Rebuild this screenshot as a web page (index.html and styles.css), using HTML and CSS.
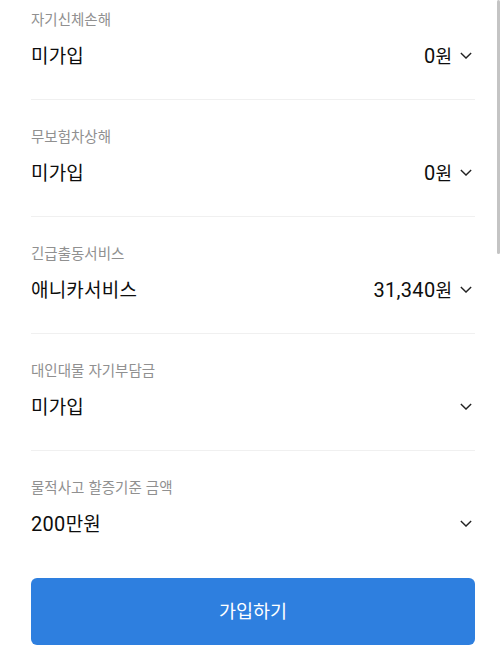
FILE: index.html
```html
<!DOCTYPE html>
<html lang="ko">
<head>
<meta charset="utf-8">
<link rel="stylesheet" href="styles.css">
</head>
<body>
<div class="page">
  <div class="list">
    <div class="item">
      <div class="label">자기신체손해</div>
      <div class="row"><span class="value">미가입</span><span class="right"><span class="price"><span class="num">0</span>원</span><svg class="chev" viewBox="0 0 14 8"><path d="M1 1l6 6 6-6"/></svg></span></div>
    </div>
    <div class="item">
      <div class="label">무보험차상해</div>
      <div class="row"><span class="value">미가입</span><span class="right"><span class="price"><span class="num">0</span>원</span><svg class="chev" viewBox="0 0 14 8"><path d="M1 1l6 6 6-6"/></svg></span></div>
    </div>
    <div class="item">
      <div class="label">긴급출동서비스</div>
      <div class="row"><span class="value">애니카서비스</span><span class="right"><span class="price"><span class="num">31,340</span>원</span><svg class="chev" viewBox="0 0 14 8"><path d="M1 1l6 6 6-6"/></svg></span></div>
    </div>
    <div class="item">
      <div class="label">대인대물 자기부담금</div>
      <div class="row"><span class="value">미가입</span><span class="right"><svg class="chev" viewBox="0 0 14 8"><path d="M1 1l6 6 6-6"/></svg></span></div>
    </div>
    <div class="item last">
      <div class="label">물적사고 할증기준 금액</div>
      <div class="row"><span class="value"><span class="num">200</span>만원</span><span class="right"><svg class="chev" viewBox="0 0 14 8"><path d="M1 1l6 6 6-6"/></svg></span></div>
    </div>
  </div>
  <button class="cta">가입하기</button>
</div>
<div class="scrollbar"></div>
</body>
</html>
```
FILE: styles.css
```css
html, body {
  margin: 0;
  padding: 0;
  background: #fff;
  overflow: hidden;
}
body {
  font-family: "Noto Sans CJK KR", "Noto Sans", sans-serif;
  color: #111;
}
.page {
  padding: 0 25px 0 31px;
}
.list {
  display: flex;
  flex-direction: column;
}
.item {
  padding: 26px 0 31px;
  border-bottom: 1px solid #f0f0f0;
}
.item:first-child {
  padding-top: 9px;
}
.item.last {
  border-bottom: none;
  padding-bottom: 42px;
}
.label {
  font-size: 14.5px;
  line-height: 20px;
  color: #909090;
}
.row {
  margin-top: 13px;
  display: flex;
  align-items: center;
  justify-content: space-between;
  height: 26px;
}
.value {
  font-size: 19px;
  font-weight: 400;
  line-height: 26px;
  color: #0d0d0d;
  letter-spacing: 0.2px;
}
.num {
  font-family: Roboto, "Noto Sans CJK KR", sans-serif;
  font-size: 20px;
  font-weight: 400;
  letter-spacing: 0.3px;
}
.right {
  display: flex;
  align-items: center;
  gap: 8px;
}
.price {
  font-size: 18px;
  font-weight: 400;
  line-height: 26px;
  color: #0d0d0d;
}
.chev {
  width: 12px;
  height: 7px;
  fill: none;
  stroke: #222;
  stroke-width: 1.6;
  margin-right: 3px;
}
.cta {
  display: block;
  width: 100%;
  height: 67px;
  border: none;
  border-radius: 6px;
  background: #2e7fdf;
  color: #fff;
  font-family: "Noto Sans CJK KR", sans-serif;
  font-size: 18.5px;
  font-weight: 400;
  padding: 0 0 4px;
}
.scrollbar {
  position: fixed;
  top: 0;
  right: 0;
  width: 3px;
  height: 254px;
  background: #c4c4c4;
  border-radius: 2px;
}
```
